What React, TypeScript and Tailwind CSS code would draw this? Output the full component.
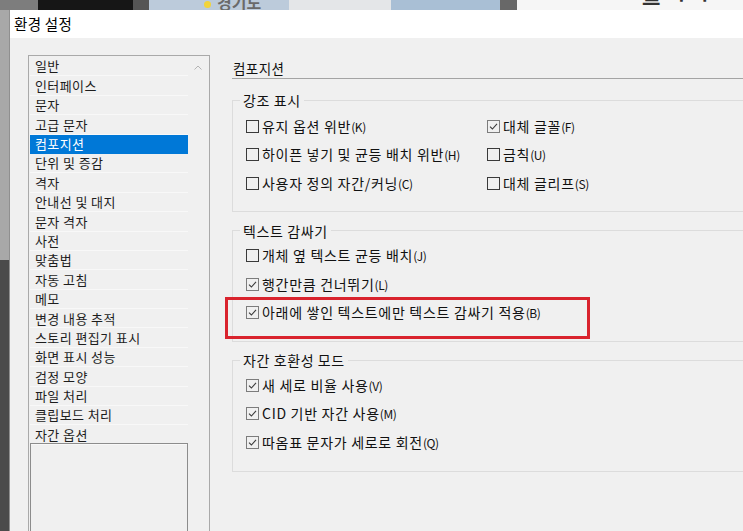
import React from "react";

const FONT = { fontFamily: "'Noto Sans CJK KR', 'Noto Sans', sans-serif" };

const MENU = [
  "일반",
  "인터페이스",
  "문자",
  "고급 문자",
  "컴포지션",
  "단위 및 증감",
  "격자",
  "안내선 및 대지",
  "문자 격자",
  "사전",
  "맞춤법",
  "자동 고침",
  "메모",
  "변경 내용 추적",
  "스토리 편집기 표시",
  "화면 표시 성능",
  "검정 모양",
  "파일 처리",
  "클립보드 처리",
  "자간 옵션",
];

function Box({ checked }: { checked?: boolean }) {
  return (
    <svg width="13" height="13" viewBox="0 0 13 13" className="shrink-0">
      <rect
        x="0.5"
        y="0.5"
        width="12"
        height="12"
        fill="none"
        stroke={checked ? "#7c7c7c" : "#3a3a3a"}
      />
      {checked && (
        <path d="M3 6.6 L5.4 9 L10 3.8" fill="none" stroke="#3c3c3c" strokeWidth="1.1" />
      )}
    </svg>
  );
}

function Check({ label, hot, checked }: { label: string; hot: string; checked?: boolean }) {
  return (
    <div className="flex items-center gap-[3px] h-[28.5px] text-[14px] tracking-[0.7px] text-[#111] whitespace-nowrap">
      <Box checked={checked} />
      <span>
        {label}
        <span className="text-[12px] tracking-[-0.4px]">({hot})</span>
      </span>
    </div>
  );
}

function Group({
  title,
  className,
  children,
}: {
  title: string;
  className: string;
  children: React.ReactNode;
}) {
  return (
    <fieldset className={`border border-[#dcdcdc] ${className}`}>
      <legend className="ml-[7px] px-[3px] leading-[18px] text-[14px] tracking-[0.6px] text-[#111]">
        {title}
      </legend>
      <div className="pl-[13px]">{children}</div>
    </fieldset>
  );
}

export default function App() {
  return (
    <div className="w-[743px] h-[531px] overflow-hidden flex flex-col bg-[#f0f0f0]" style={FONT}>
      {/* backdrop behind the dialog */}
      <div className="h-[10px] flex shrink-0 overflow-hidden">
        <div className="w-[38px] bg-[#7d7d7d]" />
        <div className="w-[95px] bg-[#161616]" />
        <div className="w-[16px] bg-[#555]" />
        <div className="w-[140px] bg-[#bccbdb] flex items-end gap-[6px] pl-[55px]">
          <span className="w-[7px] h-[7px] rounded-full bg-[#f2d43a] mb-[2px]" />
          <span className="text-[16px] leading-[16px] font-bold text-[#6a6a6a]">경기도</span>
        </div>
        <div className="w-[102px] bg-[#e4e6e8]" />
        <div className="w-[109px] bg-[#a9bfd5]" />
        <div className="w-[17px] bg-[#686868]" />
        <div className="flex-1 bg-[#f6f6f6] flex items-end pl-[125px]">
          <span className="text-[20px] leading-[12px] font-bold text-[#333] tracking-[6px]">관리나 ㅡ</span>
        </div>
      </div>

      <div className="flex flex-1 min-h-0">
        <div className="w-[9px] shrink-0 flex flex-col">
          <div className="h-[250px] bg-[#a8a8a8]" />
          <div className="flex-1 bg-[#4b4b4b]" />
        </div>
        <div className="w-px bg-[#8f8f8f] shrink-0" />

        {/* dialog */}
        <div className="flex-1 flex flex-col min-w-0">
          <div className="h-[28px] bg-white flex items-center pl-[4px] text-[14.5px] tracking-[0.3px] text-black shrink-0">
            환경 설정
          </div>

          <div className="flex-1 flex pl-[18px] pt-[17px] min-h-0">
            {/* category list */}
            <div className="w-[182px] h-[480px] shrink-0 border border-[#a9a9a9] flex p-px">
              <div className="w-[158px] flex flex-col">
                {MENU.map((m, i) => (
                  <div
                    key={m}
                    className={`h-[19.4px] shrink-0 flex items-center pl-[5px] text-[13px] tracking-[0.4px] border-b ${
                      i === 4
                        ? "bg-[#0078d7] text-white border-[#0078d7]"
                        : "text-[#1d1d1d] border-[#f8f8f8]"
                    }`}
                  >
                    {m}
                  </div>
                ))}
                <div className="flex-1 mt-[-2px] border border-[#8c8c8c]" />
              </div>
              <div className="flex-1 flex justify-center pt-[8px]">
                <svg width="8" height="5" viewBox="0 0 8 5">
                  <path d="M0.5 4.5 L4 1 L7.5 4.5" fill="none" stroke="#b4b4b4" />
                </svg>
              </div>
            </div>

            {/* settings panel */}
            <div className="w-[540px] shrink-0 ml-[22px] pt-[4px] flex flex-col">
              <div className="h-[18px] leading-[18px] text-[13.5px] tracking-[0.4px] text-[#111] pl-[1px]">
                컴포지션
              </div>
              <div className="mt-[1px] h-px bg-[#a4a4a4]" />

              <Group title="강조 표시" className="mt-[12px] pt-[3px] pb-[13px]">
                <div className="flex">
                  <div className="w-[241px]">
                    <Check label="유지 옵션 위반" hot="K" />
                    <Check label="하이픈 넣기 및 균등 배치 위반" hot="H" />
                    <Check label="사용자 정의 자간/커닝" hot="C" />
                  </div>
                  <div>
                    <Check label="대체 글꼴" hot="F" checked />
                    <Check label="금칙" hot="U" />
                    <Check label="대체 글리프" hot="S" />
                  </div>
                </div>
              </Group>

              <Group title="텍스트 감싸기" className="mt-[10px] pt-[2px] pb-[14px]">
                <Check label="개체 옆 텍스트 균등 배치" hot="J" />
                <Check label="행간만큼 건너뛰기" hot="L" checked />
                <div className="relative">
                  <Check label="아래에 쌓인 텍스트에만 텍스트 감싸기 적용" hot="B" checked />
                  <div className="absolute top-[-2px] left-[-21px] w-[365px] h-[42px] border-[3px] border-[#d9232d]" />
                </div>
              </Group>

              <Group title="자간 호환성 모드" className="mt-[9px] pt-[2px] pb-[14px]">
                <Check label="새 세로 비율 사용" hot="V" checked />
                <Check label="CID 기반 자간 사용" hot="M" checked />
                <Check label="따옴표 문자가 세로로 회전" hot="Q" checked />
              </Group>
            </div>
          </div>
        </div>
      </div>
    </div>
  );
}
